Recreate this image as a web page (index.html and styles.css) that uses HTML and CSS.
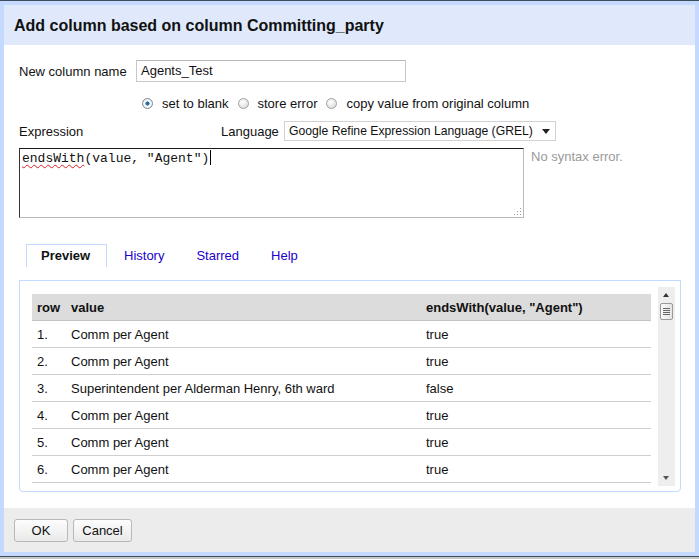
FILE: index.html
```html
<!DOCTYPE html>
<html>
<head>
<meta charset="utf-8">
<link rel="stylesheet" href="styles.css">
</head>
<body>
<div class="topline"></div>
<div class="dialog">
  <div class="header">Add column based on column Committing_party</div>
  <div class="body">
    <div class="row name-row">
      <span class="label name-label">New column name</span>
      <div class="input">Agents_Test</div>
    </div>
    <div class="row radio-row">
      <span class="radio checked"></span><span class="rlabel">set to blank</span>
      <span class="radio"></span><span class="rlabel">store error</span>
      <span class="radio"></span><span class="rlabel">copy value from original column</span>
    </div>
    <div class="row expr-row">
      <span class="label expr-label">Expression</span>
      <span class="label lang-label">Language</span>
      <div class="select">Google Refine Expression Language (GREL)<span class="caret"></span></div>
    </div>
    <div class="row text-row">
      <div class="textarea"><span class="misspelled">endsWith</span>(value, "Agent")<span class="cursor"></span><span class="grip"></span></div>
      <span class="status">No syntax error.</span>
    </div>
    <div class="tabs">
      <span class="tab active">Preview</span>
      <span class="tab">History</span>
      <span class="tab">Starred</span>
      <span class="tab">Help</span>
    </div>
    <div class="panel">
      <div class="scroll-area">
        <table class="preview">
          <thead>
            <tr><th class="c-row">row</th><th class="c-val">value</th><th>endsWith(value, "Agent")</th></tr>
          </thead>
          <tbody>
            <tr><td>1.</td><td>Comm per Agent</td><td>true</td></tr>
            <tr><td>2.</td><td>Comm per Agent</td><td>true</td></tr>
            <tr><td>3.</td><td>Superintendent per Alderman Henry, 6th ward</td><td>false</td></tr>
            <tr><td>4.</td><td>Comm per Agent</td><td>true</td></tr>
            <tr><td>5.</td><td>Comm per Agent</td><td>true</td></tr>
            <tr><td>6.</td><td>Comm per Agent</td><td>true</td></tr>
          </tbody>
        </table>
      </div>
      <div class="scrollbar">
        <div class="arrow up"></div>
        <div class="thumb"><span></span><span></span><span></span><span></span></div>
        <div class="track"></div>
        <div class="arrow down"></div>
      </div>
    </div>
  </div>
  <div class="footer">
    <button class="btn ok">OK</button>
    <button class="btn cancel">Cancel</button>
  </div>
</div>
<div class="bottomline"></div>
</body>
</html>
```

FILE: styles.css
```css
html, body {
  margin: 0;
  padding: 0;
  width: 699px;
  height: 559px;
  overflow: hidden;
  font-family: "Liberation Sans", Arial, sans-serif;
  font-size: 13px;
  color: #111;
  background: #c8c8c8;
}

.topline {
  height: 1px;
  background: #3d4d5e;
}

.dialog {
  border: 4px solid #c3d9ff;
  background: #fff;
  display: flex;
  flex-direction: column;
}

.header {
  height: 39px;
  background: #dfe9fb;
  font-size: 16px;
  font-weight: bold;
  color: #111;
  padding-left: 10px;
  display: flex;
  align-items: center;
  padding-top: 1px;
}

.body {
  height: 463px;
  padding: 0 0 0 15px;
  background: #fff;
}

.row {
  display: flex;
  align-items: center;
}

.name-row {
  margin-top: 15px;
  height: 22px;
}

.name-label {
  width: 117px;
}

.input {
  width: 264px;
  height: 20px;
  border: 1px solid #c8c8c8;
  border-top-color: #b8b8b8;
  padding-left: 4px;
  line-height: 20px;
  font-size: 13px;
}

.radio-row {
  margin-top: 13px;
  height: 17px;
  padding-left: 123px;
}

.radio {
  width: 11px;
  height: 11px;
  border-radius: 50%;
  box-sizing: border-box;
  border: 1px solid #a0a0a0;
  background: radial-gradient(circle at 40% 35%, #ffffff 0%, #e6e6e6 60%, #cfcfcf 100%);
  margin-right: 9px;
  flex: none;
}

.radio.checked {
  background: radial-gradient(circle at 50% 50%, #1f5f8c 0%, #2a7ab0 28%, #ffffff 38%, #e6e6e6 80%, #cfcfcf 100%);
  border-color: #7a8a9a;
}

.rlabel {
  margin-right: 9px;
}

.expr-row {
  margin-top: 9px;
  height: 20px;
}

.expr-label {
  width: 202px;
}

.lang-label {
  width: 63px;
}

.select {
  width: 266px;
  height: 18px;
  border: 1px solid #d2d2d2;
  padding-left: 4px;
  line-height: 18px;
  position: relative;
  background: #fff;
  font-size: 12.2px;
}

.caret {
  position: absolute;
  right: 5px;
  top: 7px;
  width: 0;
  height: 0;
  border-left: 4px solid transparent;
  border-right: 4px solid transparent;
  border-top: 5px solid #222;
}

.text-row {
  margin-top: 7px;
  align-items: flex-start;
}

.textarea {
  width: 499px;
  height: 66px;
  border: 1px solid #b9b9b9;
  border-top-color: #1a1a1a;
  border-left-color: #333;
  padding: 1px 2px;
  font-family: "Liberation Mono", "Courier New", monospace;
  font-size: 13px;
  line-height: 17px;
  position: relative;
  white-space: pre;
}

.misspelled {
  text-decoration: underline wavy #e02020;
  text-decoration-thickness: 1px;
  text-underline-offset: 2px;
}

.cursor {
  display: inline-block;
  width: 1px;
  height: 15px;
  background: #000;
  vertical-align: -3px;
  margin-left: 1px;
}

.grip {
  position: absolute;
  right: 2px;
  bottom: 2px;
  width: 8px;
  height: 8px;
  background:
    radial-gradient(circle, #9a9a9a 0.7px, transparent 1px) 0 0 / 3px 3px;
  clip-path: polygon(100% 0, 100% 100%, 0 100%);
}

.status {
  margin-left: 7px;
  margin-top: 1px;
  color: #9a9a9a;
}

.tabs {
  margin-top: 26px;
  display: flex;
  padding-left: 7px;
  height: 23px;
}

.tab {
  padding: 0 14px;
  margin-right: 2px;
  color: #2200cc;
  line-height: 22px;
  border: 1px solid transparent;
  border-bottom: none;
}

.tab.active {
  border-color: #c3d9ff;
  color: #111;
  font-weight: bold;
  padding: 0 14px 0 14px;
  min-width: 51px;
}

.panel {
  margin-top: 13px;
  border: 1px solid #c3d9ff;
  border-radius: 0 0 4px 4px;
  display: flex;
  padding: 6px 5px 4px 12px;
  box-sizing: border-box;
  height: 212px;
  width: 662px;
}

.scroll-area {
  width: 619px;
  margin-right: 7px;
  overflow: hidden;
}

.preview {
  width: 619px;
  border-collapse: collapse;
  margin-top: 7px;
}

.preview th {
  background: #dcdcdc;
  text-align: left;
  font-weight: bold;
  height: 26px;
  padding: 0 0 0 5px;
  border-bottom: 1px solid #c4c4c4;
}

.preview td {
  height: 26px;
  padding: 0 0 0 5px;
  border-bottom: 1px solid #cfcfcf;
}

.preview th.c-row {
  width: 29px;
}

.preview th.c-val {
  width: 350px;
}

.scrollbar {
  width: 17px;
  height: 199px;
  background: #eeeeee;
  display: flex;
  flex-direction: column;
  align-items: center;
}

.arrow {
  width: 17px;
  height: 16px;
  position: relative;
  flex: none;
}

.arrow::after {
  content: "";
  position: absolute;
  left: 5px;
  width: 0;
  height: 0;
  border-left: 3px solid transparent;
  border-right: 3px solid transparent;
}

.arrow.up::after {
  top: 6px;
  border-bottom: 4px solid #333;
}

.arrow.down::after {
  top: 6px;
  border-top: 4px solid #555;
}

.thumb {
  width: 13px;
  height: 17px;
  border: 1px solid #9a9a9a;
  border-radius: 2px;
  background: linear-gradient(to right, #fafafa, #e4e4e4);
  display: flex;
  flex-direction: column;
  justify-content: center;
  align-items: center;
  gap: 1px;
  box-sizing: border-box;
  flex: none;
}

.thumb span {
  width: 7px;
  height: 1px;
  background: #666;
}

.track {
  flex: 1;
}

.footer {
  height: 44px;
  background: #ececec;
  display: flex;
  align-items: center;
  padding-left: 10px;
  gap: 5px;
}

.btn {
  font-family: "Liberation Sans", Arial, sans-serif;
  font-size: 13px;
  color: #111;
  height: 23px;
  border: 1px solid #b8b8b8;
  border-radius: 3px;
  background: linear-gradient(#fdfdfd, #e9e9e9);
  padding: 0;
}

.btn.ok {
  width: 54px;
}

.btn.cancel {
  width: 59px;
}

.bottomline {
  height: 1px;
  background: #3d4d5e;
}
```
